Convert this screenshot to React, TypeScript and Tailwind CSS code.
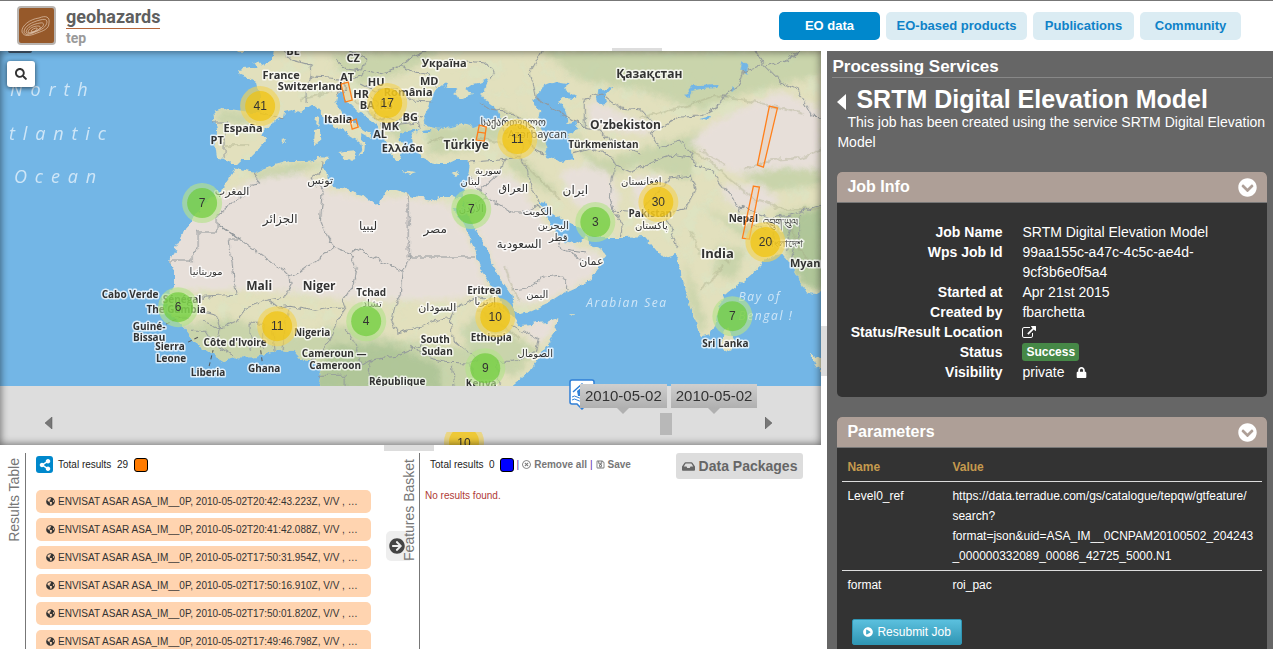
import React from "react";
import {
  FaSearch, FaShareAlt, FaGlobeAmericas, FaInbox, FaRegSave, FaRegTimesCircle,
  FaArrowCircleRight, FaLock, FaChevronCircleDown, FaPlayCircle,
} from "react-icons/fa";

const LAND = [
  // Europe and Asia
  "M275,45 L272,60 262,65 258,60 254,63 258,70 248,68 239,70 241,75 250,78 257,82 259,90 261,97 260,108 258,113 250,113 235,111 222,109 214,112 215,120 217,130 215,145 217,158 225,159 230,164 235,164 241,158 252,158 258,152 260,147 266,140 262,134 268,126 276,121 283,117 284,112 292,110 300,113 306,108 312,104 318,109 325,118 334,125 345,132 354,138 360,143 361,150 358,157 363,152 364,143 361,140 361,133 370,138 371,134 360,127 352,122 348,118 343,114 338,106 336,100 337,95 343,93 345,98 349,104 356,111 366,117 372,121 378,126 381,133 385,142 390,152 396,160 400,160 402,150 404,146 398,140 400,133 406,131 414,130 420,129 412,134 413,140 414,148 421,158 430,162 440,164 448,164 456,160 468,160 471,163 469,175 465,190 462,199 464,203 468,217 475,230 484,245 490,262 497,273 503,283 511,295 513,308 516,313 530,311 548,303 568,290 590,280 600,266 605,255 601,249 590,245 585,236 581,240 573,244 563,242 557,235 551,225 547,218 543,209 540,202 546,203 552,213 562,220 572,225 582,229 586,235 597,238 607,238 625,238 645,237 650,243 662,258 675,254 679,258 681,275 690,305 697,330 703,337 710,335 715,325 718,305 725,295 740,283 755,270 765,261 775,255 783,254 790,263 797,275 805,292 815,294 830,285 830,45 Z",
  // Africa
  "M462,199 L450,197 440,197 434,200 421,198 408,194 396,190 388,190 383,194 380,203 373,204 363,195 352,192 343,188 331,187 328,181 327,173 320,168 329,158 318,157 313,160 305,161 290,161 275,165 262,170 256,173 247,171 240,170 235,167 232,176 225,186 216,193 207,200 194,218 185,228 181,238 174,250 170,261 174,272 174,285 171,293 166,300 170,310 175,320 184,328 190,336 196,344 208,352 223,361 235,357 255,357 270,352 283,350 294,352 300,359 311,360 320,368 322,375 319,390 506,390 530,370 545,347 556,331 557,318 545,322 530,324 518,325 515,320 508,312 500,299 490,285 484,276 478,260 475,250 470,238 462,220 451,208 456,208 461,214 464,208 Z",
  // Islands
  "M236,51 L246,51 242,53 Z M337,153 L357,151 353,161 344,157 Z M314,129 L321,128 321,140 316,145 313,140 Z M317,117 L320,119 319,126 316,124 Z M401,170 L416,172 410,174 Z M451,174 L460,170 456,176 Z M722,332 L728,328 734,340 731,349 724,352 721,346 Z M808,354 L816,357 830,362 830,376 816,366 Z M570,314 L575,314 572,316 Z M280,140 L286,139 283,142 Z",
].join(" ");

const WATER = [
  "M423,118 L428,108 432,95 437,88 443,84 450,88 458,88 452,94 460,99 467,96 473,94 465,89 472,84 482,82 489,80 486,85 484,92 480,94 484,99 492,105 499,113 501,119 492,118 484,123 474,127 463,123 450,126 440,129 430,127 424,124 Z",
  "M533,101 L536,94 545,86 555,82 567,84 565,90 577,96 575,98 562,97 558,104 564,108 567,117 566,124 575,121 577,130 568,133 571,145 573,160 560,162 548,158 546,150 547,138 540,126 538,118 540,111 Z",
  "M421,131 L431,130 430,133 422,133 Z M598,88 L604,91 608,86 613,87 604,96 606,103 599,104 597,97 Z M684,95 L692,85 700,86 716,85 716,88 700,89 690,91 688,98 Z M700,119 L712,116 708,121 Z M742,60 L748,66 746,74 740,70 Z M730,87 L734,90 730,92 Z",
];

const DESERT = [
  "M216,195 L235,190 250,180 275,176 300,172 318,183 330,190 365,198 400,196 450,203 475,250 485,280 486,288 470,296 450,300 400,300 350,300 300,293 250,290 172,290 165,260 180,225 Z",
  "M470,180 L495,170 515,178 530,200 545,225 570,245 590,250 603,255 590,278 550,300 520,305 500,280 478,235 466,205 Z",
  "M560,170 L590,165 610,175 620,200 610,220 590,215 570,200 Z",
  "M588,100 L605,105 625,115 650,125 650,135 610,130 588,125 Z",
  "M640,215 L630,180 655,175 668,188 660,210 Z",
  "M690,140 L720,118 760,100 780,90 821,110 821,170 780,168 740,175 712,165 Z",
  "M535,320 L557,318 550,335 538,345 520,330 Z",
  "M720,185 L760,185 780,200 750,215 725,200 Z",
];

const GREEN = [
  "M180,325 L230,318 300,335 340,325 400,340 440,345 480,350 500,360 490,392 190,392 Z",
  "M460,330 L495,300 512,335 540,350 515,375 480,370 Z",
  "M700,205 L740,225 760,232 800,215 821,205 821,290 805,290 780,240 740,235 Z",
  "M560,120 L600,160 640,150 700,130 690,180 640,165 600,178 Z",
  "M540,50 L821,50 821,75 740,95 700,110 640,90 580,80 Z",
  "M330,55 L440,50 410,70 360,85 340,70 Z M215,110 L260,114 250,125 220,122 Z",
  "M425,128 L500,122 505,135 470,150 430,155 Z M380,125 L400,120 418,128 398,140 Z",
  "M500,150 L530,165 560,195 545,190 515,172 Z M495,110 L535,125 560,150 540,150 510,130 Z",
  "M250,172 L300,162 325,162 300,172 260,182 Z M684,260 L705,320 700,335 688,300 Z",
  "M715,245 L745,250 735,280 715,275 Z M730,170 L821,160 821,185 770,190 Z",
];

const BORDERS = [
  "M322,161 L320,172 312,178 323,193 320,222 327,238 334,247 298,273 290,277 284,271 239,239 217,224",
  "M217,224 L217,214 246,194 246,186 258,184 259,178 255,173",
  "M170,261 L192,261 192,253 198,248 198,232 217,232 217,224",
  "M217,224 L239,239 229,239 236,295 203,297 196,296",
  "M334,247 L350,253 356,249 403,271 409,257",
  "M408,194 L408,257 475,257 M403,271 L401,294 394,305 391,320 397,333",
  "M350,253 L356,268 353,285 343,300 346,308 338,320 330,340 320,352 311,360",
  "M290,277 L291,285 284,297 266,300 246,308 236,321 220,328 203,321",
  "M268,300 L278,308 290,306 315,311 330,308 346,308",
  "M250,350 L250,323 263,323 262,350 M275,351 L272,325 M283,350 L285,322 290,308",
  "M168,308 L195,310 215,315 220,328 218,345 235,357 M190,330 L205,330 213,343 M175,318 L190,318",
  "M320,375 L345,375 345,386 M368,386 L370,360 395,356 425,343 M346,330 L355,345 362,365 370,360",
  "M397,333 L415,328 440,320 450,318 455,308 475,297 490,300 505,312",
  "M450,318 L452,340 465,350 480,360 M410,346 L430,358 450,362 470,363 M512,325 L538,340 535,352 515,362 497,362 500,386",
  "M455,386 L452,365 M480,360 L470,363 475,386",
  "M214,122 L228,122 224,140 224,158 M259,112 L284,119",
  "M283,51 L292,60 310,65 311,77 306,90 306,103 M310,77 L330,78 345,80 345,91 336,94",
  "M335,60 L345,68 362,70 366,58 350,51 M345,80 L360,76 366,70 380,74 400,66 M360,84 L375,92 380,88 400,90 M370,95 L378,104 374,115 382,121 387,117 397,120 410,116 421,118 M400,90 L410,100 432,101",
  "M400,66 L410,58 425,52 M400,66 L415,72 430,75 436,86 M490,80 L494,72 484,62 466,60",
  "M382,121 L384,130 392,131 400,124 418,122 420,128",
  "M478,101 L490,110 505,112 520,119 530,128 M498,118 L506,132 522,134 522,158 M522,134 L535,150 545,155",
  "M470,162 L500,160 520,157 527,170 530,188 540,202 M469,178 L480,190 500,172 505,158 M480,190 L486,197 512,212 525,212 538,205 M466,203 L478,203 486,197",
  "M538,205 L545,214 M557,237 L562,250 585,253 M562,250 L588,262 M562,276 L542,278 525,288 512,290 M562,276 L568,289",
  "M535,97 L530,72 542,51 M534,97 L584,127 584,98 602,94 620,108 640,110 652,123 660,128",
  "M584,127 L600,130 612,142 640,154 M573,153 L590,148 610,156 615,165 612,178 610,200 613,210 622,225 620,237",
  "M615,165 L630,172 655,160 670,155 690,158 695,162 M612,210 L640,212 655,195 670,178 690,175 695,190 684,210 665,215 672,235 678,248",
  "M660,128 L680,117 700,116 720,105 725,95 738,85 742,72 755,68 762,62 755,51",
  "M660,128 L650,133 660,148 680,140 690,152 695,165 710,170 725,190 740,207 770,218 790,215 821,205",
  "M762,64 L780,82 798,90 812,116 821,117 M765,66 L785,60 800,51",
  "M740,207 L738,215 765,230 M770,218 L775,245 M780,217 L790,230 785,250 M800,215 L798,235 790,262",
];

const MINOR = [
  "M425,143 L440,138 460,143 480,138 500,143 515,155 530,170 545,185 560,200",
  "M500,108 L520,118 545,130 M640,118 L660,112 690,105 715,95 745,100 780,108 803,114",
  "M690,150 L710,162 730,180 755,200 785,210 821,208 M700,150 L725,165 M745,170 L770,160 800,158 821,150",
  "M690,230 L700,255 712,250 730,262 M700,290 L712,280 722,265 M790,225 L800,250 812,265",
  "M300,100 L318,95 335,88 M355,100 L372,115 385,122 M230,128 L255,130 M225,145 L250,145",
  "M494,290 L480,310 500,325 520,338 M505,265 L512,290 520,300",
];

type Label = { t: string; x: number; y: number; s?: number; soft?: boolean };
const LABELS: Label[] = [
  { t: "BE", x: 293, y: 55 }, { t: "CZ", x: 353, y: 62 }, { t: "France", x: 281, y: 79 },
  { t: "AT", x: 347, y: 81 }, { t: "Switzerland", x: 310, y: 90 }, { t: "HU", x: 376, y: 86 },
  { t: "HR", x: 361, y: 98 }, { t: "România", x: 408, y: 96 }, { t: "BA", x: 367, y: 109 },
  { t: "RS", x: 386, y: 109 }, { t: "Italia", x: 338, y: 123 }, { t: "BG", x: 410, y: 121 },
  { t: "MK", x: 390, y: 130 }, { t: "AL", x: 380, y: 138 }, { t: "Ελλάδα", x: 402, y: 152 },
  { t: "España", x: 243, y: 132 }, { t: "PT", x: 217, y: 144 }, { t: "Україна", x: 444, y: 67 },
  { t: "MD", x: 429, y: 85 }, { t: "Қазақстан", x: 649, y: 78, s: 12 },
  { t: "O'zbekiston", x: 625, y: 129, s: 12 }, { t: "Türkmenistan", x: 603, y: 148, s: 10 },
  { t: "Türkiye", x: 466, y: 149, s: 12 }, { t: "საქართველო", x: 513, y: 126, s: 10, soft: true },
  { t: "Azərbaycan", x: 537, y: 138, soft: true },
  { t: "Pakistan", x: 650, y: 217, s: 10 }, { t: "Nepal", x: 743, y: 222, s: 10 }, { t: "India", x: 717, y: 258, s: 13 },
  { t: "Myanmar", x: 816, y: 267 }, { t: "Sri Lanka", x: 725, y: 347, s: 10 },
  { t: "Mali", x: 259, y: 290, s: 12 }, { t: "Niger", x: 319, y: 290, s: 12 }, { t: "Tchad", x: 371, y: 296, s: 10 },
  { t: "Cabo Verde", x: 130, y: 298, s: 10 }, { t: "Sénégal", x: 182, y: 303, s: 10 }, { t: "The Gambia", x: 176, y: 313, s: 10 },
  { t: "Guiné-", x: 149, y: 330, s: 10 }, { t: "Bissau", x: 149, y: 341, s: 10 }, { t: "Sierra", x: 170, y: 350, s: 10 },
  { t: "Leone", x: 171, y: 362, s: 10 }, { t: "Liberia", x: 208, y: 376, s: 10 }, { t: "Côte d'Ivoire", x: 235, y: 346, s: 10 },
  { t: "Ghana", x: 264, y: 372, s: 10 }, { t: "Nigeria", x: 312, y: 336, s: 10 }, { t: "Cameroun —", x: 334, y: 357, s: 10 },
  { t: "Cameroon", x: 335, y: 369, s: 10 }, { t: "République", x: 397, y: 385, s: 10 }, { t: "Eritrea", x: 484, y: 294, s: 10 },
  { t: "South", x: 435, y: 343, s: 10 }, { t: "Sudan", x: 437, y: 355, s: 10 }, { t: "Ethiopia", x: 491, y: 341, s: 10 },
  { t: "Kenya", x: 481, y: 387, s: 10 },
  { t: "المغرب", x: 232, y: 195, soft: true }, { t: "تونس", x: 320, y: 184, soft: true },
  { t: "الجزائر", x: 280, y: 223, s: 12, soft: true }, { t: "ليبيا", x: 368, y: 230, s: 12, soft: true },
  { t: "مصر", x: 435, y: 233, s: 12, soft: true }, { t: "موريتانيا", x: 206, y: 275, s: 10, soft: true },
  { t: "تشاد", x: 372, y: 307, s: 10, soft: true }, { t: "السودان", x: 437, y: 311, soft: true },
  { t: "سورية", x: 488, y: 174, s: 10, soft: true }, { t: "لبنان", x: 470, y: 185, s: 10, soft: true },
  { t: "العراق", x: 513, y: 192, soft: true }, { t: "ایران", x: 575, y: 194, s: 12, soft: true },
  { t: "الأردن", x: 471, y: 212, s: 10, soft: true }, { t: "الكويت", x: 537, y: 215, s: 10, soft: true },
  { t: "البحرين", x: 553, y: 229, s: 10, soft: true }, { t: "قطر", x: 558, y: 241, s: 10, soft: true },
  { t: "السعودية", x: 519, y: 248, s: 12, soft: true }, { t: "عمان", x: 591, y: 265, soft: true },
  { t: "اليمن", x: 537, y: 298, s: 10, soft: true }, { t: "إرتريا", x: 485, y: 305, s: 10, soft: true },
  { t: "الصومال", x: 535, y: 357, s: 10, soft: true }, { t: "افغانستان", x: 641, y: 185, s: 10, soft: true },
  { t: "پاکستان", x: 651, y: 229, s: 10, soft: true }, { t: "বাংলাদেশ", x: 784, y: 247, s: 10, soft: true },
  { t: "འབྲུག་ཡུལ", x: 780, y: 226, s: 10, soft: true },
];

const CLUSTERS: [number, number, number][] = [
  [41, 260, 106], [17, 387, 103], [11, 517, 139], [7, 202, 203], [7, 471, 209], [3, 595, 222],
  [30, 658, 202], [20, 765, 242], [6, 178, 307], [11, 277, 326], [4, 366, 321], [10, 495, 317],
  [7, 732, 316], [9, 485, 368],
];

const RESULTS = [
  "2010-05-02T20:42:43.223Z", "2010-05-02T20:41:42.088Z", "2010-05-02T17:50:31.954Z",
  "2010-05-02T17:50:16.910Z", "2010-05-02T17:50:01.820Z", "2010-05-02T17:49:46.798Z",
];

function MapCanvas() {
  return (
    <svg
      viewBox="0 51 821 335" preserveAspectRatio="xMinYMin slice" role="img" aria-label="World map"
      className="block h-[335px] w-full bg-[#73b6e6] font-['Open_Sans','Noto_Sans','DejaVu_Sans',sans-serif]"
    >
      <defs>
        <clipPath id="land"><path d={LAND} /></clipPath>
        <filter id="rough" x="0" y="0" width="100%" height="100%" filterUnits="objectBoundingBox">
          <feTurbulence type="fractalNoise" baseFrequency="0.12" numOctaves="3" seed="4" />
          <feDisplacementMap in="SourceGraphic" scale="7" xChannelSelector="R" yChannelSelector="G" />
        </filter>
        <filter id="soft"><feGaussianBlur stdDeviation="3" /></filter>
        <filter id="mottle" x="0" y="0" width="100%" height="100%">
          <feTurbulence type="fractalNoise" baseFrequency="0.05" numOctaves="4" seed="9" />
          <feColorMatrix values="0 0 0 0 0.70  0 0 0 0 0.78  0 0 0 0 0.56  5 0 0 0 -2.6" />
        </filter>
      </defs>
      <g filter="url(#rough)">
        <rect x="-10" y="41" width="850" height="360" fill="#73b6e6" />
        <g clipPath="url(#land)">
          <rect x="0" y="41" width="840" height="360" fill="#e2e0bd" />
          <rect x="0" y="41" width="840" height="360" filter="url(#mottle)" opacity="0.55" />
          <g filter="url(#soft)">
            {GREEN.map((d) => <path key={d} d={d} fill="#b9cc9f" opacity="0.6" />)}
            <path d="M390,345 L440,365 440,392 310,392 330,345 Z M775,215 L825,205 825,290 800,285 Z" fill="#a5c192" opacity="0.7" />
            {DESERT.map((d) => <path key={d} d={d} fill="#e7dfd9" />)}
          </g>
          {MINOR.map((d) => <path key={d} d={d} fill="none" stroke="#a3a684" strokeWidth="2" opacity="0.35" />)}
        </g>
        {WATER.map((d) => <path key={d} d={d} fill="#73b6e6" />)}
        {BORDERS.map((d) => <path key={d} d={d} fill="none" stroke="#93999c" strokeWidth="1" />)}
      </g>
      <path d="M188,342 L198,337 M209,366 L213,350 M262,361 L260,346 M166,324 L180,317" stroke="#555" strokeDasharray="4 3" fill="none" />
      <g fill="#cfe6f7" fontStyle="italic" className="tracking-widest">
        <g fontSize="18">
          <text x="10" y="96">N o r t h</text>
          <text x="9" y="140">t l a n t i c</text>
          <text x="14" y="183">O c e a n</text>
        </g>
        <g fontSize="12">
          <text x="586" y="307">Arabian Sea</text>
          <text x="738" y="301">Bay of</text>
          <text x="738" y="320">Bengal !</text>
        </g>
      </g>
      {LABELS.map((l) => (
        <text
          key={l.t + l.x} x={l.x} y={l.y} textAnchor="middle" fontSize={l.s ?? 11}
          fontWeight={l.soft ? 400 : 700} fill="#333" stroke="#fff" strokeOpacity="0.75"
          strokeWidth="3" strokeLinejoin="round" paintOrder="stroke"
        >{l.t}</text>
      ))}
      <g fill="#ff8c2a" fillOpacity="0.08" stroke="#ff7f1a" strokeWidth="1.3">
        <path d="M341,84 L348,82 352,100 345,102 Z M350,121 L356,119 358,127 352,129 Z" />
        <path d="M479,125 L486,127 484,141 476,140 Z M478,132 L485,133" />
        <path d="M769,106 L777,108 763,167 757,165 Z M753,186 L759,187 749,239 742,238 Z" />
      </g>
      {CLUSTERS.map(([n, x, y]) => {
        const warm = n >= 10;
        return (
          <g key={`${x}-${y}`}>
            <circle cx={x} cy={y} r="20" fill={warm ? "#f1d357" : "#b5e28c"} fillOpacity="0.65" />
            <circle cx={x} cy={y} r="15" fill={warm ? "#f0c20c" : "#6ecc39"} fillOpacity="0.7" />
            <text x={x} y={y + 4} textAnchor="middle" fontSize="12" fill="#333" className="font-['Liberation_Sans',sans-serif]">{n}</text>
          </g>
        );
      })}
    </svg>
  );
}

function DateTip({ date }: { date: string }) {
  return (
    <div className="flex flex-col items-center">
      <span className="bg-linear-to-b from-[#cfcfcf] to-[#b0b0b0] px-[5px] text-[15px] leading-6 text-[#333]">{date}</span>
      <span className="size-0 border-x-[6px] border-t-[6px] border-x-transparent border-t-[#b0b0b0]" />
    </div>
  );
}

function Timeline() {
  return (
    <div className="relative h-[59px] bg-[#ddd]">
      <svg viewBox="0 0 26 31" className="absolute -top-[7px] left-[569px] h-[31px] w-[26px]" aria-hidden="true">
        <path d="M3,1 H23 Q25,1 25,3 V23 Q25,25 23,25 H18 L13,30 8,25 H3 Q1,25 1,23 V3 Q1,1 3,1 Z" fill="#fff" stroke="#2f7fd6" strokeWidth="1.5" />
        <path d="M4,13 L13,5 22,13" fill="none" stroke="#2f7fd6" strokeWidth="1.5" />
        <path d="M8,12 L13,8 19,12 V17 H9 Z" fill="#2f7fd6" />
        <path d="M3,18 q2.5,-2 5,0 t5,0 t5,0 M3,21 q2.5,-2 5,0 t5,0 t5,0" fill="none" stroke="#2f7fd6" strokeWidth="1" />
      </svg>
      <div className="absolute -top-0.5 left-[580px] flex gap-1">
        <DateTip date="2010-05-02" />
        <DateTip date="2010-05-02" />
      </div>
      <button aria-label="Earlier" className="absolute top-[31px] left-[45px]">
        <svg viewBox="0 0 8 12" className="h-3 w-2"><path d="M0,6 L7,0 V12 Z" fill="#777" stroke="#555" strokeWidth="0.5" /></svg>
      </button>
      <button aria-label="Later" className="absolute top-[31px] left-[765px]">
        <svg viewBox="0 0 8 12" className="h-3 w-2"><path d="M7,6 L0,0 V12 Z" fill="#777" stroke="#555" strokeWidth="0.5" /></svg>
      </button>
      <div className="absolute top-[27px] left-[660px] h-[22px] w-3 bg-[#b8b8b8]" />
      <div className="absolute top-[46px] left-[444px] h-[13px] w-10 overflow-hidden">
        <svg viewBox="0 0 40 13" className="block h-[13px] w-10">
          <circle cx="20" cy="10" r="20" fill="#f1d357" fillOpacity="0.65" />
          <circle cx="20" cy="10" r="15" fill="#f0c20c" fillOpacity="0.65" />
          <text x="20" y="15" textAnchor="middle" fontSize="12" fill="#333" className="font-['Liberation_Sans',sans-serif]">10</text>
        </svg>
      </div>
    </div>
  );
}

function Logo() {
  return (
    <a href="#home" className="flex items-start gap-2.5 pl-[17px]">
      <svg viewBox="0 0 39 39" className="size-[39px]" aria-hidden="true">
        <rect x="1" y="1" width="37" height="37" rx="3" fill="#96592a" stroke="#b9b4b0" strokeWidth="2" />
        <g fill="none" stroke="#e3c9b2" strokeWidth="0.7">
          <path d="M5,26 C4,20 13,13 22,12 C29,9 33,11 32,17 C32,23 26,25 20,27 C13,30 7,31 5,26 Z" />
          <path d="M7,26 C7,20 15,16 23,14 C30,12 31,15 29,19 C26,24 20,25 16,27 C11,29 8,29 7,26 Z" />
          <path d="M9,26 C10,21 16,18 23,17 C28,16 27,20 24,22 C19,26 10,29 9,26 Z" />
          <path d="M11,26 C12,22 17,20 21,20 C25,20 23,23 21,24 C17,26 12,28 11,26 Z" />
          <path d="M14,25 C15,23 18,22 20,22 C21,23 19,24 18,25 C16,26 14,26 14,25 Z" />
        </g>
      </svg>
      <span className="flex flex-col font-['Roboto',sans-serif] font-bold">
        <span className="border-b border-[#b5653a] text-lg leading-[22px] text-[#5f5f5f]">geohazards</span>
        <span className="text-sm leading-[18px] text-[#9a9a9a]">tep</span>
      </span>
    </a>
  );
}

const TAB = "rounded-[5px] bg-[#dbecf3] py-1 text-center text-[13px] leading-5 font-bold text-[#0f82c8]";

function Header() {
  return (
    <header className="relative flex h-[51px] shrink-0 items-start justify-between border-t border-[#777] bg-white pt-[5px]">
      <Logo />
      <nav className="mt-1.5 mr-8 flex gap-1.5">
        <a href="#data" className="w-[101px] rounded-[5px] bg-[#0088cc] py-1 text-center text-[13px] leading-5 font-bold text-white">EO data</a>
        <a href="#products" className={`${TAB} w-[141px]`}>EO-based products</a>
        <a href="#publications" className={`${TAB} w-[101px]`}>Publications</a>
        <a href="#community" className={`${TAB} w-[101px]`}>Community</a>
      </nav>
      <span className="absolute bottom-0 left-[612px] h-[3px] w-[50px] bg-[#ddd]" />
    </header>
  );
}

function ResultsPane() {
  return (
    <section className="flex w-[47%] min-w-0 pt-2">
      <h2 className="w-[26px] shrink-0 border-r border-[#777] pt-[5px] text-[#777]">
        <span className="block rotate-180 pr-1 text-sm leading-5 [writing-mode:vertical-rl]">Results Table</span>
      </h2>
      <div className="min-w-0 flex-1 overflow-hidden pr-[15px] pl-2.5">
        <div className="flex h-[23px] items-center">
          <button aria-label="Share" className="mr-[5px] flex size-[17px] items-center justify-center rounded-[3px] bg-[#0088cc] text-white">
            <FaShareAlt className="size-3" />
          </button>
          <span className="text-[10px] text-[#222]">Total results&nbsp; 29</span>
          <span className="ml-1.5 size-[14px] rounded-[3px] border border-black bg-[#ff7b00]" />
        </div>
        <ul className="mt-[14px] flex flex-col gap-[5px]">
          {RESULTS.map((r) => (
            <li key={r} className="flex h-[23px] items-center gap-[3px] rounded-[5px] bg-[#ffd4b0] pl-2.5 text-[10px] text-[#333]">
              <FaGlobeAmericas className="size-[9px] shrink-0" />
              <span className="whitespace-nowrap">ENVISAT ASAR ASA_IM__0P, {r}, V/V , …</span>
            </li>
          ))}
        </ul>
      </div>
    </section>
  );
}

function BasketPane() {
  return (
    <section className="relative flex min-w-0 flex-1 pt-2">
      <span className="absolute top-0 -left-0.5 h-1.5 w-[50px] bg-[#ddd]" />
      <button aria-label="Move to basket" className="absolute top-[86px] left-0 h-[30px] w-6 rounded-l-[5px] bg-[#eee] pl-[3px] text-[#444]">
        <FaArrowCircleRight className="size-4" />
      </button>
      <h2 className="relative w-[34px] shrink-0 border-r border-[#777] pt-1.5 text-[#777]">
        <span className="ml-auto block w-5 rotate-180 text-sm leading-5 [writing-mode:vertical-rl]">Features Basket</span>
      </h2>
      <div className="min-w-0 flex-1 pl-[5px]">
        <div className="flex items-start pr-[18px]">
          <div className="flex h-[23px] flex-1 items-center gap-[3px] pl-[5px] text-[10px] text-[#222]">
            <span>Total results&nbsp; 0</span>
            <span className="ml-0.5 size-[14px] rounded-[3px] border border-black bg-[#0000ff]" />
            <span className="text-[#5a2ea6]">|</span>
            <button className="flex items-center gap-[3px] font-bold text-[#777]"><FaRegTimesCircle className="size-[9px]" />Remove all</button>
            <span className="text-[#5a2ea6]">|</span>
            <button className="flex items-center gap-[3px] font-bold text-[#777]"><FaRegSave className="size-[9px]" />Save</button>
          </div>
          <button className="flex h-[26px] items-center gap-1 rounded-[3px] bg-[#ddd] px-1.5 text-sm font-bold text-[#666]">
            <FaInbox className="size-[13px]" />Data Packages
          </button>
        </div>
        <p className="mt-[9px] text-[10px] leading-4 text-[#b03a36]">No results found.</p>
      </div>
    </section>
  );
}

function ExternalLink() {
  return (
    <svg viewBox="0 0 1792 1664" className="h-[13px] w-[14px]" fill="currentColor" aria-hidden="true">
      <path d="M1408 928v320q0 119-84.5 203.5t-203.5 84.5h-832q-119 0-203.5-84.5t-84.5-203.5v-832q0-119 84.5-203.5t203.5-84.5h704q14 0 23 9t9 23v64q0 14-9 23t-23 9h-704q-66 0-113 47t-47 113v832q0 66 47 113t113 47h832q66 0 113-47t47-113v-320q0-14 9-23t23-9h64q14 0 23 9t9 23zm384-864v512q0 26-19 45t-45 19-45-19l-176-176-652 652q-10 10-23 10t-23-10l-114-114q-10-10-10-23t10-23l652-652-176-176q-19-19-19-45t19-45 45-19h512q26 0 45 19t19 45z" />
    </svg>
  );
}

function PanelHead({ title }: { title: string }) {
  return (
    <div className="flex h-[31px] items-center justify-between rounded-t-[5px] border-b border-[#777] bg-[#ae9f97] px-2.5">
      <h4 className="text-base font-bold">{title}</h4>
      <button aria-label={`Collapse ${title}`}><FaChevronCircleDown className="size-[19px]" /></button>
    </div>
  );
}

function Row({ name, children }: { name: string; children: React.ReactNode }) {
  return (
    <>
      <dt className="text-right font-bold">{name}</dt>
      <dd className="flex min-h-5 items-center">{children}</dd>
    </>
  );
}

function Sidebar() {
  return (
    <aside className="min-w-0 flex-1 overflow-hidden bg-[#666] text-white">
      <h2 className="mr-px ml-[5px] border-b border-[#888] pt-[5px] text-[17px] leading-[21px] font-bold">Processing Services</h2>
      <div className="pt-2 pr-1.5 pl-2.5">
        <div className="flex items-center gap-[9px]">
          <button aria-label="Back" className="pt-1.5">
            <svg viewBox="0 0 10 16" className="block h-4 w-2.5"><path d="M0,8 L9,0 V16 Z" fill="currentColor" /></svg>
          </button>
          <h3 className="text-[25px] leading-[26px] font-bold">SRTM Digital Elevation Model</h3>
        </div>
        <p className="indent-2.5 text-sm leading-5">This job has been created using the service SRTM Digital Elevation Model</p>
        <section className="mt-5 rounded-[5px] bg-[#333]">
          <PanelHead title="Job Info" />
          <dl className="grid grid-cols-[165px_1fr] gap-x-5 pt-[19px] pr-6 pb-[15px] text-sm leading-5">
            <Row name="Job Name">SRTM Digital Elevation Model</Row>
            <Row name="Wps Job Id">99aa155c-a47c-4c5c-ae4d-<br />9cf3b6e0f5a4</Row>
            <Row name="Started at">Apr 21st 2015</Row>
            <Row name="Created by">fbarchetta</Row>
            <Row name="Status/Result Location"><a href="#result" aria-label="Open result location"><ExternalLink /></a></Row>
            <Row name="Status"><span className="rounded-[3px] bg-[#468847] px-1 text-xs leading-[18px] font-bold">Success</span></Row>
            <Row name="Visibility">private<FaLock className="ml-3 size-[11px]" /></Row>
          </dl>
        </section>
        <section className="mt-5 rounded-t-[5px] bg-[#333] px-[5px] pb-6">
          <div className="-mx-[5px]"><PanelHead title="Parameters" /></div>
          <table className="w-full table-fixed text-left text-xs leading-5">
            <thead>
              <tr className="text-[#c59a4e]">
                <th className="w-[105px] px-[5px] pt-[9px] pb-1">Name</th>
                <th className="px-[5px] pt-[9px] pb-1">Value</th>
              </tr>
            </thead>
            <tbody className="align-top">
              <tr className="border-t border-[#ddd]">
                <td className="px-[5px] py-1">Level0_ref</td>
                <td className="py-1 pl-[5px] whitespace-nowrap">https://data.terradue.com/gs/catalogue/tepqw/gtfeature/<br />search?<br />format=json&amp;uid=ASA_IM__0CNPAM20100502_204243<br />_000000332089_00086_42725_5000.N1</td>
              </tr>
              <tr className="border-t border-[#ddd]">
                <td className="px-[5px] py-1">format</td>
                <td className="px-[5px] py-1">roi_pac</td>
              </tr>
            </tbody>
          </table>
          <button className="mt-5 ml-2.5 flex h-[26px] items-center gap-1 rounded-[2px] border border-[#2f96b4] bg-linear-to-b from-[#5bc0de] to-[#2f96b4] px-2.5 text-xs">
            <FaPlayCircle className="size-2.5" />Resubmit Job
          </button>
        </section>
      </div>
    </aside>
  );
}

export default function App() {
  return (
    <div className="flex h-screen flex-col overflow-hidden bg-white font-['Liberation_Sans',Arial,sans-serif]">
      <Header />
      <main className="flex min-h-0 flex-1">
        <div className="relative flex w-[65%] shrink-0 flex-col pr-1.5">
          <div className="relative shrink-0 overflow-hidden">
            <MapCanvas />
            <Timeline />
            <div className="pointer-events-none absolute inset-0 shadow-[inset_0_0_8px_rgba(0,0,0,0.6)]" />
            <button aria-label="Search" className="absolute top-2.5 left-[7px] flex h-[26px] w-7 items-center justify-center rounded-[3px] bg-white text-[#333] shadow-[0_1px_5px_rgba(0,0,0,0.65)]">
              <FaSearch className="size-3" />
            </button>
            <span className="absolute top-0 left-2 h-0.5 w-6 rounded-b-sm bg-[#345]" />
          </div>
          <span className="absolute top-[275px] right-0 h-[50px] w-1.5 bg-[#ddd]" />
          <div className="flex min-h-0 flex-1 overflow-hidden">
            <ResultsPane />
            <BasketPane />
          </div>
        </div>
        <Sidebar />
      </main>
    </div>
  );
}
